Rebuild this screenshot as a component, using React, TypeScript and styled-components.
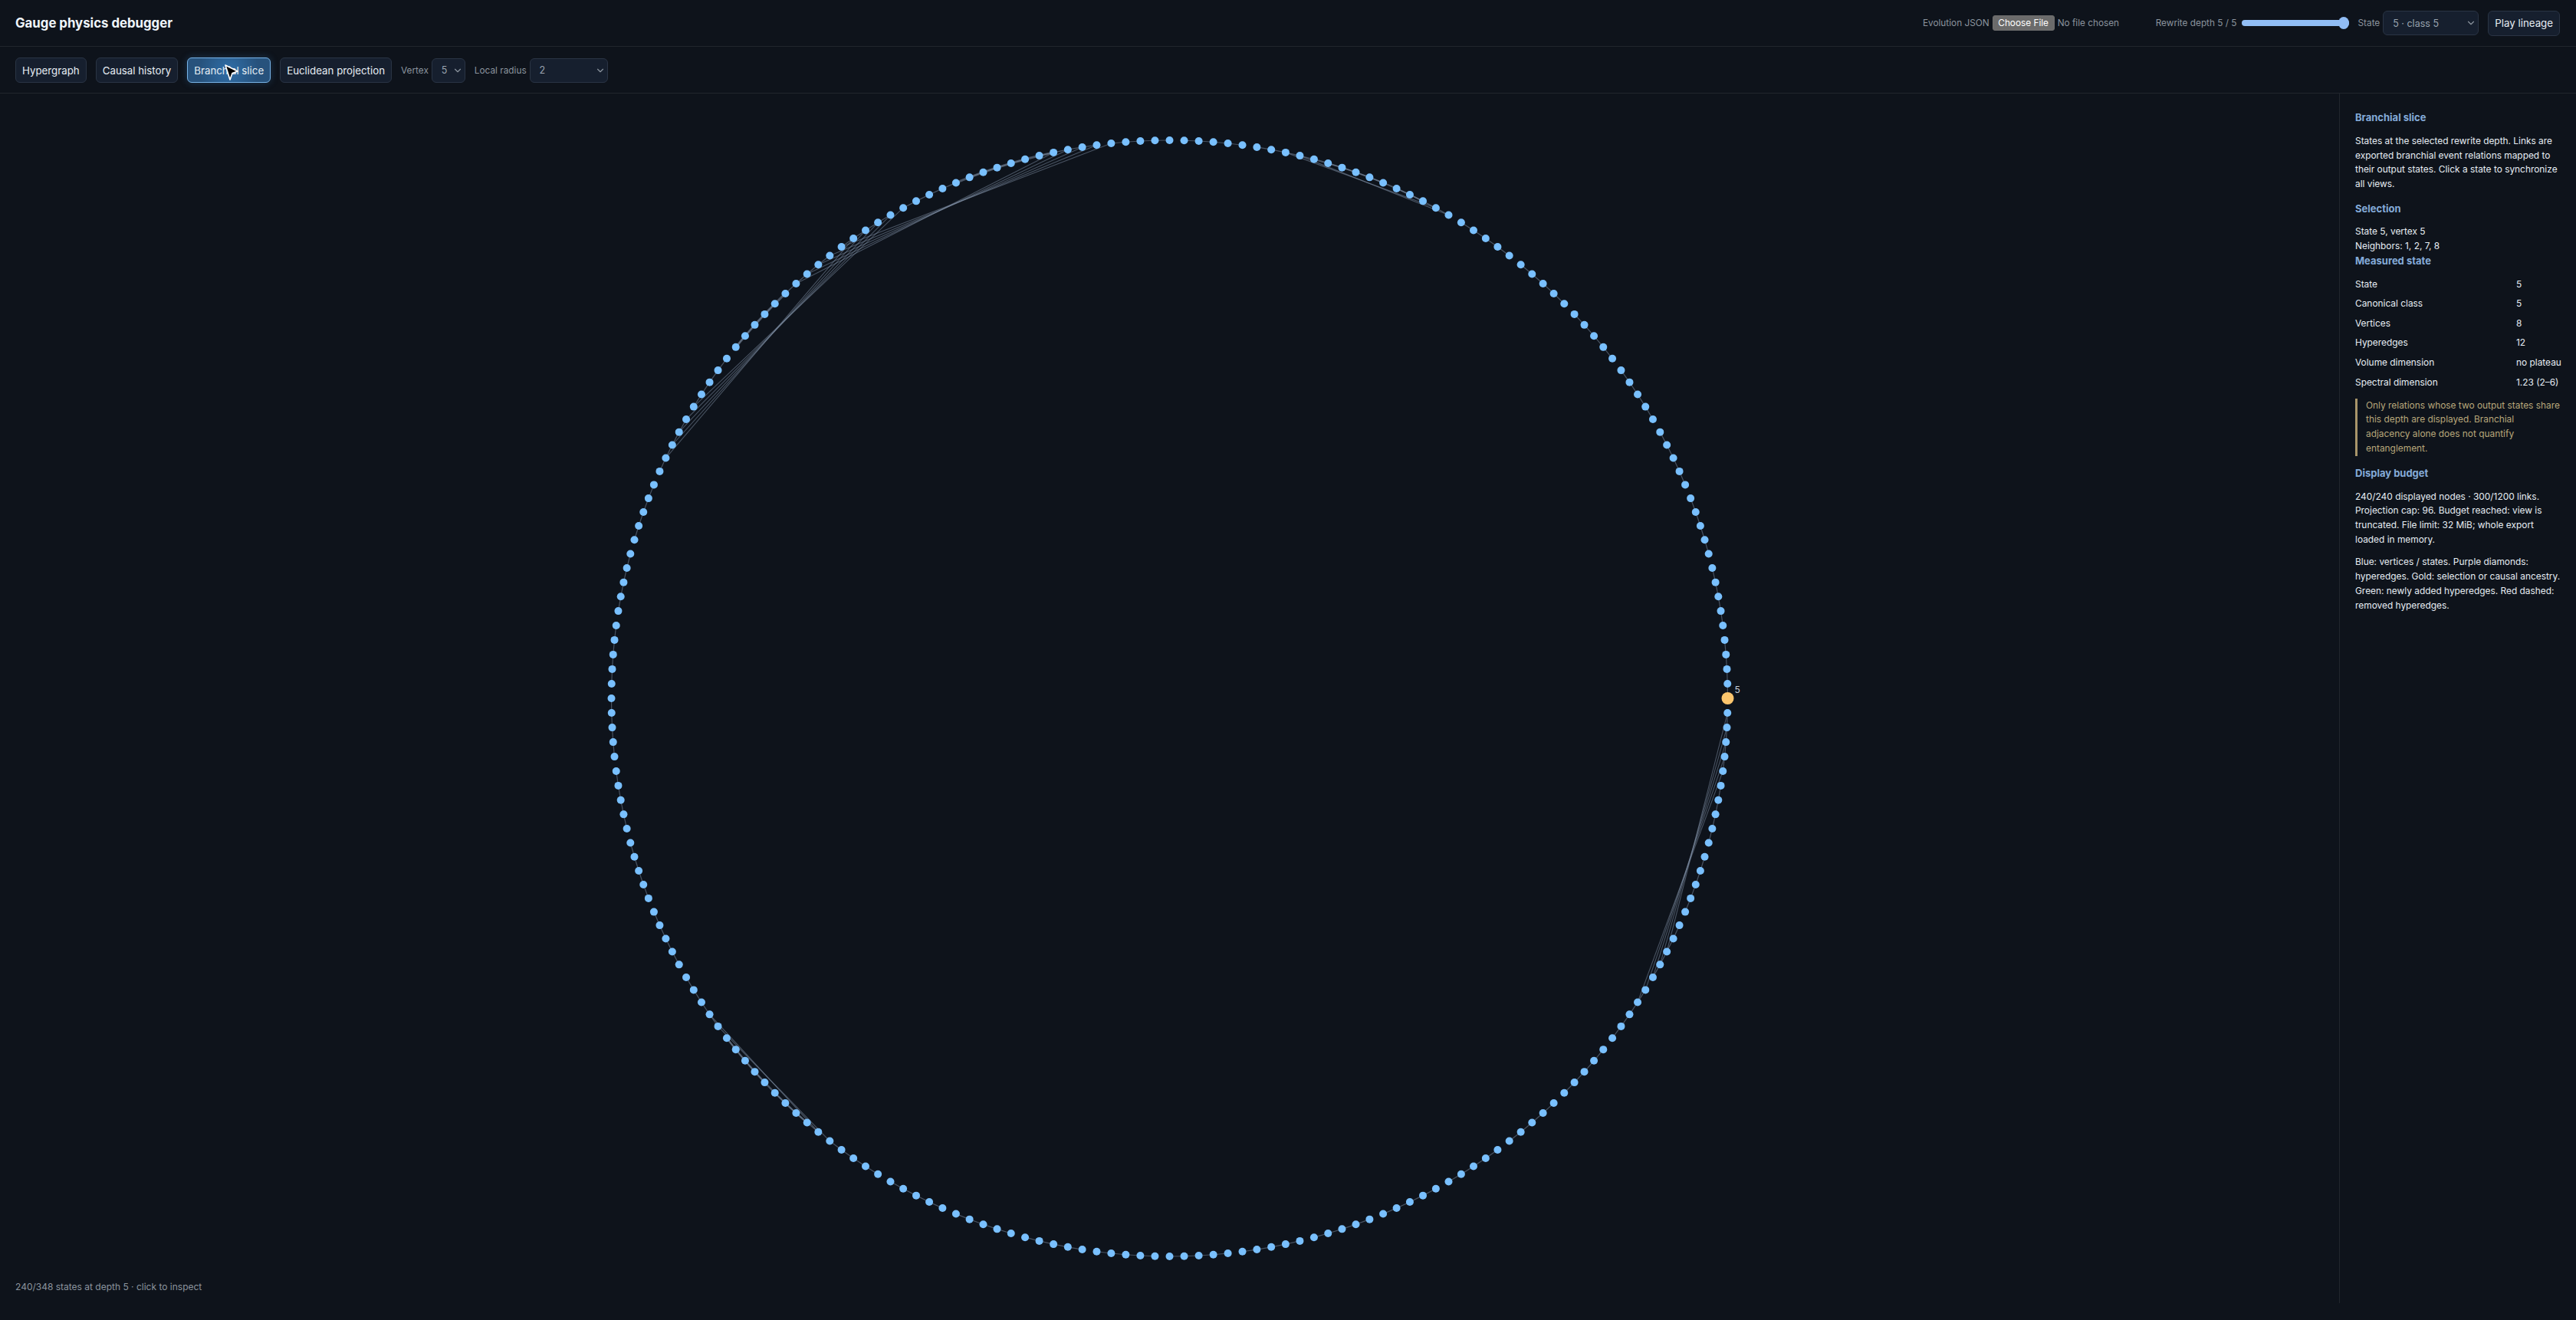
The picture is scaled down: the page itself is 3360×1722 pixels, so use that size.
import styled, { createGlobalStyle } from "styled-components";
import { ChevronDown } from "lucide-react";

const GlobalStyle = createGlobalStyle`
  html, body {
    margin: 0;
    padding: 0;
    background: #0e131b;
  }
  body {
    font-family: Inter, "Noto Sans", "Liberation Sans", sans-serif;
    color: #e6edf3;
  }
`;

const Page = styled.div`
  width: 3360px;
  height: 1722px;
  overflow: hidden;
  background: #0e131b;
`;

const Header = styled.header`
  height: 60px;
  padding: 0 21px 0 20px;
  border-bottom: 1px solid #21262d;
  display: flex;
  align-items: center;
  justify-content: space-between;
`;

const Title = styled.h1`
  margin: 0;
  font-size: 16.8px;
  font-weight: 700;
  color: #f0f6fc;
`;

const HeaderTools = styled.div`
  display: flex;
  align-items: center;
  gap: 12px;
`;

const Field = styled.label<{ $gap?: number }>`
  display: flex;
  align-items: center;
  gap: ${(p) => p.$gap ?? 4}px;
  font-size: 11.8px;
  color: #8b949e;
`;

const FileInput = styled.input`
  width: 201px;
  font: inherit;
  font-size: 11.8px;
  color: #8b949e;
  &::file-selector-button {
    height: 20px;
    width: 81px;
    padding: 0;
    margin-right: 4px;
    border: 1px solid #6f6f6f;
    border-radius: 3px;
    background: #6b6b6b;
    color: #fff;
    font: inherit;
    font-size: 11.8px;
  }
`;

const Range = styled.input`
  appearance: none;
  width: 140px;
  height: 16px;
  margin: 0;
  background: transparent;
  &::-webkit-slider-runnable-track {
    height: 8px;
    border-radius: 4px;
    background: #91bdf5;
  }
  &::-webkit-slider-thumb {
    appearance: none;
    width: 14px;
    height: 16px;
    margin-top: -4px;
    border-radius: 50%;
    background: #91bdf5;
  }
`;

const SelectBox = styled.div<{ $width: number; $height?: number }>`
  position: relative;
  width: ${(p) => p.$width}px;
  height: ${(p) => p.$height ?? 32}px;
  svg {
    position: absolute;
    right: 3px;
    top: 50%;
    transform: translateY(-50%);
    color: #8b949e;
    pointer-events: none;
  }
`;

const Select = styled.select`
  appearance: none;
  width: 100%;
  height: 100%;
  padding: 0 0 0 12px;
  border: 1px solid #2a3444;
  border-radius: 6px;
  background: #161f2e;
  color: #9aa4b0;
  font: inherit;
  font-size: 12.5px;
`;

const Button = styled.button<{ $active?: boolean }>`
  position: relative;
  height: 33px;
  padding: 0 8px;
  border: 1px solid ${(p) => (p.$active ? "#79b4e8" : "#2a3444")};
  border-radius: 6px;
  background: ${(p) =>
    p.$active ? "radial-gradient(circle at 50% 50%, #2f6ea8 0%, #27527c 70%)" : "#161f2e"};
  box-shadow: ${(p) => (p.$active ? "0 0 10px rgba(56, 120, 180, 0.35)" : "none")};
  color: #e6edf3;
  font: inherit;
  font-size: 13.3px;
  white-space: nowrap;
`;

const Toolbar = styled.nav`
  height: 59px;
  padding: 1px 20px 0;
  border-bottom: 1px solid #21262d;
  display: flex;
  align-items: center;
  gap: 12px;
`;

const Main = styled.main`
  height: 1578px;
  display: flex;
`;

const Stage = styled.section`
  position: relative;
  flex: 1;
  min-width: 0;
`;

const Graph = styled.svg`
  display: block;
  width: 100%;
  height: 100%;
`;

const Status = styled.div`
  position: absolute;
  left: 20px;
  bottom: 12px;
  font-size: 12px;
  line-height: 18px;
  color: #8b949e;
`;

const Sidebar = styled.aside`
  width: 309px;
  box-sizing: border-box;
  padding: 21px 20px 0;
  border-left: 1px solid #21262d;
  font-size: 11.9px;
  line-height: 18.7px;
  color: #e6edf3;
`;

const Heading = styled.h2<{ $top?: number }>`
  margin: ${(p) => p.$top ?? 0}px 0 0;
  font-size: 13px;
  line-height: 20px;
  font-weight: 700;
  color: #84abd9;
`;

const Copy = styled.p<{ $top?: number }>`
  margin: ${(p) => p.$top ?? 12}px 0 0;
`;

const Metrics = styled.dl`
  margin: 8px 0 0;
  display: grid;
  grid-template-columns: 210px 1fr;
  grid-auto-rows: 25.6px;
  align-items: center;
  dt, dd {
    margin: 0;
    white-space: nowrap;
  }
`;

const Note = styled.p`
  margin: 8px 0 0;
  padding-left: 11px;
  border-left: 3px solid #a8956a;
  color: #b8a77a;
`;

const R = 728;
const CX = 1525.5;
const CY = 789;
const pos = (i: number) => {
  const a = (i * Math.PI * 2) / 240;
  return { x: CX + R * Math.cos(a), y: CY + R * Math.sin(a) };
};

const links: [number, number, number][] = [];
for (let i = 0; i < 240; i++) {
  if ((i * 7) % 5 !== 0) links.push([i, (i + 1) % 240, 1.2]);
}
for (let i = 165; i < 172; i++) links.push([i, i + 1, 3]);
for (let i = 146; i < 151; i++) links.push([i, i + 1, 3]);
for (let i = 87; i < 95; i++) links.push([i, i + 1, 2.4]);
for (let i = 190; i < 198; i++) links.push([i, i + 1, 2]);
for (let k = 0; k < 5; k++) links.push([172 + k, 152 + k, 1.1]);
for (let k = 0; k < 5; k++) links.push([137 + k, 157 + k, 1.1]);
for (let k = 0; k < 5; k++) links.push([1 + k, 18 + k, 1.1]);
links.push([188, 199, 1.2], [189, 200, 1.2], [85, 96, 1.2], [86, 97, 1.2]);

const BranchialGraph = () => (
  <Graph viewBox="0 0 3051 1578">
    {links.map(([a, b, w], n) => {
      const p = pos(a);
      const q = pos(b);
      return (
        <line key={n} x1={p.x} y1={p.y} x2={q.x} y2={q.y} stroke="#8291a8" strokeOpacity={0.5} strokeWidth={w} />
      );
    })}
    {Array.from({ length: 240 }, (_, i) => {
      const p = pos(i);
      return i === 0 ? (
        <circle key={i} cx={p.x} cy={p.y} r={8} fill="#fbc56d" />
      ) : (
        <circle key={i} cx={p.x} cy={p.y} r={5} fill="#79c0ff" />
      );
    })}
    <text x={CX + R + 9} y={CY - 7} fill="#c9d1d9" fontSize={12}>
      5
    </text>
  </Graph>
);

const Cursor = styled.svg`
  position: absolute;
  left: 47px;
  top: 7px;
  width: 20px;
  height: 24px;
`;

const App = () => (
  <Page>
    <GlobalStyle />
    <Header>
      <Title>Gauge physics debugger</Title>
      <HeaderTools>
        <Field>
          Evolution JSON
          <FileInput type="file" />
        </Field>
        <Field $gap={6}>
          Rewrite depth 5 / 5
          <Range type="range" min={0} max={5} defaultValue={5} />
        </Field>
        <Field>
          State
          <SelectBox $width={125}>
            <Select defaultValue="5">
              <option value="5">5 · class 5</option>
            </Select>
            <ChevronDown size={14} />
          </SelectBox>
        </Field>
        <Button>Play lineage</Button>
      </HeaderTools>
    </Header>
    <Toolbar>
      <Button>Hypergraph</Button>
      <Button>Causal history</Button>
      <Button $active>
        Branchial slice
        <Cursor viewBox="0 0 20 24">
          <path d="M2 2 L18 10 L11 12.5 L8 21 Z" fill="#000" stroke="#fff" strokeWidth={1.6} strokeLinejoin="round" />
        </Cursor>
      </Button>
      <Button>Euclidean projection</Button>
      <Field>
        Vertex
        <SelectBox $width={44}>
          <Select defaultValue="5">
            <option value="5">5</option>
          </Select>
          <ChevronDown size={14} />
        </SelectBox>
      </Field>
      <Field>
        Local radius
        <SelectBox $width={102}>
          <Select defaultValue="2">
            <option value="2">2</option>
          </Select>
          <ChevronDown size={14} />
        </SelectBox>
      </Field>
    </Toolbar>
    <Main>
      <Stage>
        <BranchialGraph />
        <Status>240/348 states at depth 5 · click to inspect</Status>
      </Stage>
      <Sidebar>
        <Heading>Branchial slice</Heading>
        <Copy>
          States at the selected rewrite depth. Links are exported branchial event relations mapped to their output
          states. Click a state to synchronize all views.
        </Copy>
        <Heading $top={12}>Selection</Heading>
        <Copy $top={11}>
          State 5, vertex 5
          <br />
          Neighbors: 1, 2, 7, 8
        </Copy>
        <Heading>Measured state</Heading>
        <Metrics>
          <dt>State</dt>
          <dd>5</dd>
          <dt>Canonical class</dt>
          <dd>5</dd>
          <dt>Vertices</dt>
          <dd>8</dd>
          <dt>Hyperedges</dt>
          <dd>12</dd>
          <dt>Volume dimension</dt>
          <dd>no plateau</dd>
          <dt>Spectral dimension</dt>
          <dd>1.23 (2–6)</dd>
        </Metrics>
        <Note>
          Only relations whose two output states share this depth are displayed. Branchial adjacency alone does not
          quantify entanglement.
        </Note>
        <Heading $top={12}>Display budget</Heading>
        <Copy>
          240/240 displayed nodes · 300/1200 links. Projection cap: 96. Budget reached: view is truncated. File limit:
          32 MiB; whole export loaded in memory.
        </Copy>
        <Copy $top={11}>
          Blue: vertices / states. Purple diamonds: hyperedges. Gold: selection or causal ancestry. Green: newly added
          hyperedges. Red dashed: removed hyperedges.
        </Copy>
      </Sidebar>
    </Main>
  </Page>
);

export default App;
